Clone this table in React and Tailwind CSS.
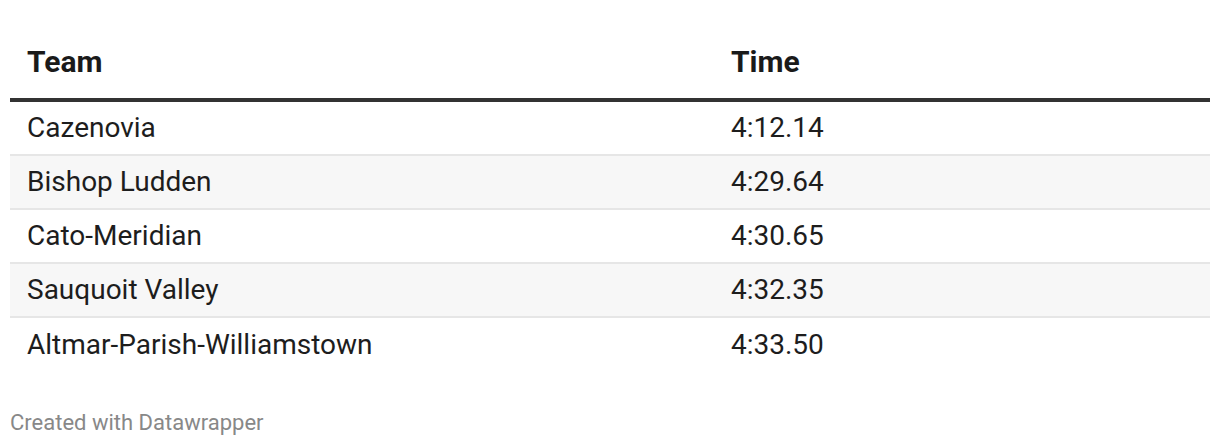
const ROWS = [
  ["Cazenovia", "4:12.14"],
  ["Bishop Ludden", "4:29.64"],
  ["Cato-Meridian", "4:30.65"],
  ["Sauquoit Valley", "4:32.35"],
  ["Altmar-Parish-Williamstown", "4:33.50"],
];

export default function App() {
  return (
    <div
      className="w-[1220px] h-[446px] bg-white px-[10px] pt-[36px] text-[#1d1d1d]"
      style={{ fontFamily: "Roboto, 'Liberation Sans', sans-serif" }}
    >
      {/* header */}
      <div className="grid grid-cols-[704px_1fr] h-[66px] border-b-4 border-[#333333] items-center pb-[10px]">
        <div className="pl-[17px] text-[30px] font-bold leading-none text-[#1a1a1a]">
          Team
        </div>
        <div className="pl-[17px] text-[30px] font-bold leading-none text-[#1a1a1a]">
          Time
        </div>
      </div>

      {/* body */}
      {ROWS.map(([team, time], i) => (
        <div
          key={team}
          className={
            "grid grid-cols-[704px_1fr] h-[54px] items-center text-[28px] leading-none " +
            (i % 2 === 1 ? "bg-[#f7f7f7] " : "bg-white ") +
            (i < ROWS.length - 1 ? "border-b-2 border-[#e6e6e6]" : "")
          }
        >
          <div className="pl-[17px]">{team}</div>
          <div className="pl-[17px]">{time}</div>
        </div>
      ))}

      <div className="mt-[40px] text-[22px] leading-none text-[#888888]">
        Created with Datawrapper
      </div>
    </div>
  );
}
